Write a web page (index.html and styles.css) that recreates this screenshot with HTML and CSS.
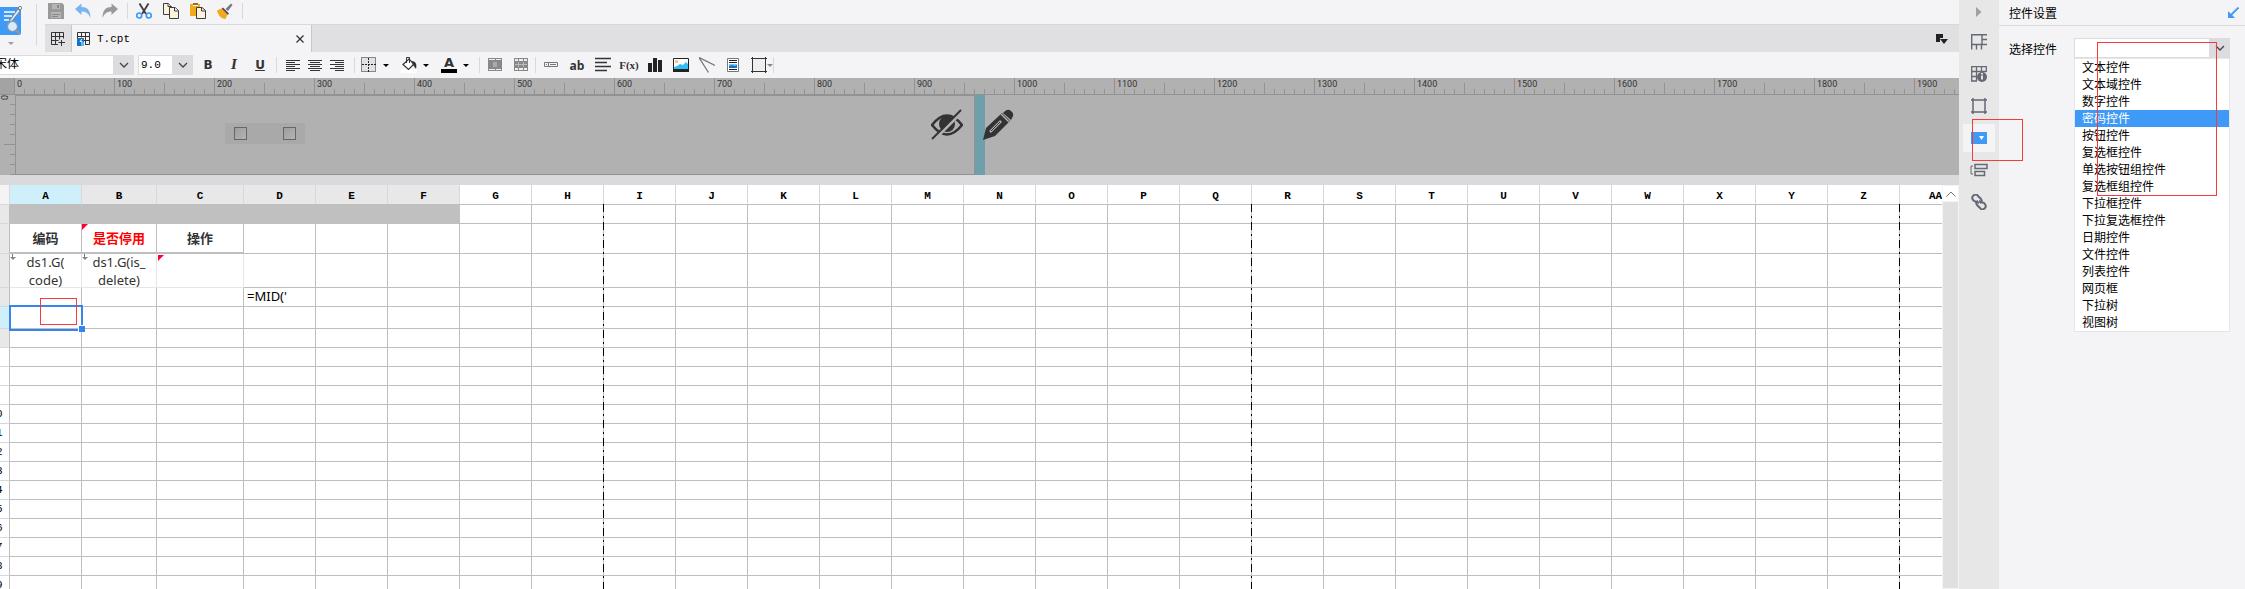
FILE: index.html
```html
<!DOCTYPE html>
<html lang="zh-CN">
<head>
  <meta charset="UTF-8" />
  <meta name="viewport" content="width=device-width, initial-scale=1" />
  <title>T.cpt</title>
  <link rel="stylesheet" href="styles.css">
</head>
<body>
<main class="editor">
  <header class="top">
    <div class="app-menu">
      <button class="app-btn" aria-label="预览">
        <svg width="22" height="40" viewBox="0 0 22 40">
          <path d="M0 2h19q2 0 2 2v24q0 2-2 2H0z" fill="#3f9af7"/>
          <path d="M4 7h11M4 11h8M4 15h5" stroke="#fff" stroke-width="1.6"/>
          <path d="M10 15l8-11 2 2-8 10-3 1z" fill="#e8e8ea" stroke="#77797f" stroke-width=".8"/>
          <circle cx="20" cy="3" r="1.6" fill="#fff" stroke="#77797f"/>
          <circle cx="12.5" cy="21.500" r="5" fill="#d4ecfd" stroke="#8b98a6" stroke-width="1.2"/>
          <path d="M16 25l4 4" stroke="#8b98a6" stroke-width="2"/>
          <path d="M8 37h6l-3 3z" fill="#a0a0a0"/>
        </svg>
      </button>
    </div>
    <div class="top-rows">
      <div class="quick">
        <div class="quick-group">
          <button class="icon" aria-label="保存"><svg viewBox="0 0 16 16"><path d="M0 0h14l2 2v14H0z" fill="#999"/><path d="M4 1h8v5H4zM3 9h10v6H3z" fill="#b5b5b5"/><path d="M9 2h2v3H9zM4 11h8v1H4zM4 13h6v1H4z" fill="#888"/></svg></button>
          <button class="icon" aria-label="撤销"><svg viewBox="0 0 16 16"><path d="M0 6l6.500-5.500V4C12 4 15.500 7 15.500 15 13.500 10.500 11 8.500 6.500 8.500V12z" fill="#79b4f2"/></svg></button>
          <button class="icon" aria-label="重做"><svg viewBox="0 0 16 16"><path d="M16 6L9.500.5V4C4 4 .5 7 .5 15 2.500 10.500 5 8.500 9.500 8.500V12z" fill="#999"/></svg></button>
        </div>
        <div class="quick-group">
          <button class="icon" aria-label="剪切"><svg viewBox="0 0 16 16" fill="none"><path d="M3.500.5L10 11M12.500.5L6 11" stroke="#3c3c44" stroke-width="1.800"/><circle cx="3.200" cy="12.500" r="2.500" stroke="#3f9af7" stroke-width="1.700"/><circle cx="12.800" cy="12.500" r="2.500" stroke="#3f9af7" stroke-width="1.700"/></svg></button>
          <button class="icon" aria-label="复制"><svg viewBox="0 0 16 16" fill="#fdf3dc" stroke="#3c3c44"><path d="M.5.500h5l3 3v8h-8z"/><path d="M5 .5v3h3.500"/><path d="M6.500 4.500h5.500l3.500 3v8h-9z"/><path d="M11.500 4.500v3.500h4"/></svg></button>
          <button class="icon" aria-label="粘贴"><svg viewBox="0 0 16 16"><path d="M0 1h10v12H0z" fill="#f2a91c"/><path d="M3 0h5v3H3z" fill="#9a6a20"/><path d="M3 2h5v1H3z" fill="#fff"/><path d="M6.500 4.500h5.500l3.500 3v8h-9z" fill="#fdf3dc" stroke="#3c3c44"/><path d="M11.500 4.500v3.500h4" fill="none" stroke="#3c3c44"/></svg></button>
          <button class="icon" aria-label="格式刷"><svg viewBox="0 0 16 16"><path d="M8.500 6L14 .5l1.500 1.500L11 8z" fill="#77798a"/><path d="M6 4.500l6 6-1.500 1.500-6-6z" fill="#4a4a50"/><path d="M4.500 5.500l6 6-2 4.500C4 15.500 1 12.500 0 7.500z" fill="#f2a91c"/></svg></button>
        </div>
      </div>
      <nav class="tabs">
        <button class="new-tab" aria-label="新建"><svg width="14" height="14" viewBox="0 0 14 14" fill="none" stroke="#333"><path d="M7 12.500H.5V.5h12v6M.5 4.500h12M.5 8.500h7M4.500.5v12M8.500.5v7M10.500 8v6M7.500 10.500h6.500"/></svg></button>
        <div class="tab">
          <svg width="14" height="14" viewBox="0 0 14 14" fill="none" stroke="#333"><path d="M.5 6V.5h12v12H8M.5 4.500h12M7 8.500h5.500M4.500.5v5M8.500.5v12"/><path d="M0 6h7v8H0z" fill="#1672c4" stroke="none"/><path d="M5 7L3 9.500h2V13" stroke="#fff"/><path d="M5 10h2v4H4z" fill="#55b9f3" stroke="none"/></svg>
          <span class="tab-name">T.cpt</span>
          <button class="tab-close" aria-label="关闭"><svg width="8" height="8" viewBox="0 0 8 8"><path d="M.5.500l7 7M7.500.5l-7 7" stroke="#333" stroke-width="1.300"/></svg></button>
        </div>
        <button class="tab-list" aria-label="标签列表"><svg width="12" height="10" viewBox="0 0 12 10" fill="#222"><path d="M0 0h7v4H4v4H0z"/><path d="M4 5h8L8 10z"/></svg></button>
      </nav>
    </div>
  </header>

  <div class="format">
    <select class="font-name" aria-label="字体"><option>宋体</option></select>
    <select class="font-size" aria-label="字号"><option>9.0</option></select>
    <div class="group style">
      <button class="icon letter" aria-label="加粗"><b>B</b></button>
      <button class="icon letter" aria-label="斜体"><i>I</i></button>
      <button class="icon letter" aria-label="下划线"><u>U</u></button>
    </div>
    <div class="group align">
      <button class="icon" aria-label="左对齐"><svg viewBox="0 0 16 16"><path d="M1 3.500h14M1 5.500h9M1 7.500h14M1 9.500h9M1 11.500h14M1 13.500h9" stroke="#333"/></svg></button>
      <button class="icon" aria-label="居中"><svg viewBox="0 0 16 16"><path d="M1 3.500h14M3 5.500h10M1 7.500h14M3 9.500h10M1 11.500h14M3 13.500h10" stroke="#333"/></svg></button>
      <button class="icon" aria-label="右对齐"><svg viewBox="0 0 16 16"><path d="M1 3.500h14M6 5.500h9M1 7.500h14M6 9.500h9M1 11.500h14M6 13.500h9" stroke="#333"/></svg></button>
    </div>
    <div class="group color">
      <button class="icon drop" aria-label="边框"><svg viewBox="0 0 16 16"><rect x=".5" y=".5" width="14" height="14" fill="#e2e2e4" stroke="#222" stroke-dasharray="1 1"/><path d="M7.500 1v14M1 7.500h14" stroke="#222" stroke-dasharray="2 1"/></svg></button>
      <button class="icon drop" aria-label="背景"><svg viewBox="0 0 16 16"><path d="M0 12h16v4H0z" fill="#fff"/><path d="M2 7.500L8 2l5 5-5.500 5.500z" fill="#fff" stroke="#333" stroke-width="1.200"/><path d="M5.500 6V.5h3V6" fill="none" stroke="#333"/><path d="M10 4c5 0 6 3 5 8l-3-4z" fill="#333"/></svg></button>
      <button class="icon drop font-color" aria-label="字体颜色">A</button>
    </div>
    <div class="group">
      <button class="icon" aria-label="合并单元格"><svg viewBox="0 0 16 16"><path d="M1 1h14v13H1z" fill="#888"/><path d="M2 2h6v1H2zM9 2h5v1H9zM2 12h6v1H2zM9 12h5v1H9z" fill="#eee"/><path d="M6 5h4v5H6z" fill="#aaa"/></svg></button>
      <button class="icon" aria-label="取消合并"><svg viewBox="0 0 16 16"><path d="M1 1h14v13H1z" fill="#888"/><path d="M2 2h3v2H2zM6 2h4v2H6zM11 2h3v2h-3zM2 11h3v2H2zM6 11h4v2H6zM11 11h3v2h-3z" fill="#eee"/><path d="M2 7.500h12M5.500 5v5M10.500 5v5" stroke="#bbb"/></svg></button>
    </div>
    <div class="group">
      <button class="icon" aria-label="控件"><svg viewBox="0 0 16 16" fill="none" stroke="#777"><path d="M1.500 5.500h13v4h-13zM5.500 5.500v4M3 7.500h1M7 7.500h6"/></svg></button>
      <button class="icon ab">ab</button>
      <button class="icon" aria-label="富文本"><svg viewBox="0 0 16 16"><path d="M0 1.500h16M0 5.500h12M0 9.500h16M0 13.500h12" stroke="#333" stroke-width="1.400"/></svg></button>
      <button class="icon fx">F(x)</button>
      <button class="icon" aria-label="图表"><svg viewBox="0 0 16 16" fill="#222"><path d="M1 6h4v9H1zM6 1h4v14H6zM11 3h4v12h-4z"/></svg></button>
      <button class="icon" aria-label="图片"><svg viewBox="0 0 16 16"><path d="M.5 1.500h15v13H.5z" fill="#fff" stroke="#222"/><circle cx="3.500" cy="4.500" r="1.500" fill="#fbb95a"/><path d="M1 10l3-1 3-2 3 1 3-3 2 2v5H1z" fill="#35bdf5"/><path d="M0 12h16v3H0z" fill="#222"/></svg></button>
      <button class="icon" aria-label="斜线"><svg viewBox="0 0 16 16"><path d="M0 .5l16 8M0 .5l9.500 15" stroke="#777" stroke-width="1.300"/></svg></button>
      <button class="icon" aria-label="子报表"><svg viewBox="0 0 16 16"><path d="M2.500 1.500h11v13h-11z" fill="#fff" stroke="#777"/><path d="M4 3.500h8M4 5.500h8M4 12.500h8" stroke="#222"/><path d="M4 7h8v4H4z" fill="#79c4f7"/><path d="M4 11V9l3-1 3 1 2-1v3z" fill="#1672c4"/></svg></button>
      <button class="icon drop-near" aria-label="悬浮元素"><svg viewBox="0 0 16 16"><path d="M1.500 1.500h12v12h-12z" fill="#eee"/><path d="M0 1.500h16M0 14.500h16M1.500 0v16M14.500 0v16" stroke="#333"/></svg></button>
    </div>
  </div>

  <section class="form-area">
    <div class="ruler">
      <div class="ruler-corner"></div>
      <div class="ruler-scale" id="scale"></div>
    </div>
    <div class="form-row">
      <div class="v-ruler"><span>0</span></div>
      <div class="form-canvas">
        <div class="form-body">
          <div class="param-box">
            <input type="checkbox" aria-label="参数一">
            <input type="checkbox" aria-label="参数二">
          </div>
        </div>
        <div class="form-handle"></div>
        <div class="form-tools">
          <svg width="32" height="32" viewBox="0 0 32 32"><path d="M1 16q15-19 30 0-15 19-30 0z" fill="none" stroke="#333" stroke-width="2.600"/><circle cx="16" cy="15" r="8" fill="#333"/><path d="M2 32L32 2" stroke="#b1b1b1" stroke-width="3"/><path d="M1 30L30 1" stroke="#333" stroke-width="2"/></svg>
          <svg width="32" height="32" viewBox="0 0 32 32"><path d="M1 31l3-12L20 4l8 8-15 15z" fill="#333"/><path d="M19 5l8 8" stroke="#b1b1b1" stroke-width="1.500"/><path d="M22 3q4-4 7-1 4 3 1 7l-1 2-8-7z" fill="#333"/><path d="M8 23L19 12" stroke="#b1b1b1" stroke-width="2.500"/><path d="M9 22L18 13" stroke="#333"/></svg>
        </div>
      </div>
    </div>
  </section>

  <section class="sheet">
    <div class="grid">
      <table id="grid">
        <thead></thead>
        <tbody></tbody>
      </table>
      <div class="page-line first"></div>
      <div class="page-line second"></div>
      <div class="page-line third"></div>
      <div class="mark cell-mark"></div>
    </div>
    <div class="scroll">
      <button class="scroll-up" aria-label="向上"><svg width="10" height="6" viewBox="0 0 10 6"><path d="M.5 5.500L5 1l4.500 4.500" fill="none" stroke="#777"/></svg></button>
      <div class="scroll-thumb"></div>
    </div>
  </section>
</main>

<nav class="strip">
  <button class="collapse" aria-label="收起"><svg width="6" height="10" viewBox="0 0 6 10"><path d="M0 0l5.500 5L0 10z" fill="#a0a0a0"/></svg></button>
  <button class="side" aria-label="单元格元素"><svg viewBox="0 0 16 16" fill="none" stroke="#666874" stroke-width="1.400"><path d="M.7 15.500V.7H16M11 .7v9.800M.7 10.500h15.300M11 5.500h5M5.500 10.500v5M10.500 10.500v5"/></svg></button>
  <button class="side" aria-label="单元格属性"><svg viewBox="0 0 16 16" fill="none" stroke="#666874" stroke-width="1.300"><path d="M6 15H.7V.7h14.600V6M.7 5.500h14.600M.7 10.500H6M5.500.7V15M10.500.7V6"/><circle cx="11" cy="11" r="5" fill="#666874" stroke="none"/><path d="M11 9.500v4M11 7v1.500" stroke="#fff" stroke-width="1.600"/></svg></button>
  <button class="side" aria-label="悬浮元素"><svg viewBox="0 0 16 16" fill="none" stroke="#666874" stroke-width="1.500"><path d="M0 2h16M0 14h16M2 0v16M14 0v16"/></svg></button>
  <button class="side active" aria-label="控件设置"><svg viewBox="0 0 16 16"><path d="M0 2h16v12H0z" fill="#3f9af7"/><path d="M8 6h5l-2.500 4z" fill="#fff"/></svg></button>
  <button class="side" aria-label="条件属性"><svg class="spread" viewBox="0 0 18 16" fill="none" stroke="#666874" stroke-width="1.500"><path d="M3 4H1v8h2" stroke-width="1"/><path d="M5 2.500h12v4H5zM5 9.500h9.500v4H5z"/></svg></button>
  <button class="side" aria-label="超级链接"><svg viewBox="0 0 16 16" fill="none" stroke="#666874" stroke-width="2"><path d="M8 9L3 7Q0 4 2 2q3-3 5 0l3 3q2 3-1 4"/><path d="M8 7l5 2q3 3 1 5-3 3-5 0l-3-3Q4 8 7 7"/></svg></button>
  <div class="mark strip-mark"></div>
</nav>

<aside class="panel">
  <div class="panel-title">
    <span>控件设置</span>
    <svg width="12" height="12" viewBox="0 0 12 12"><path d="M11.500.5L4 8" stroke="#3f9af7" stroke-width="1.800"/><path d="M1 4v7h7z" fill="#3f9af7"/></svg>
  </div>
  <div class="panel-row">
    <label for="widget">选择控件</label>
    <div class="combo">
      <select id="widget"><option></option></select>
      <ul class="menu" role="listbox" aria-label="选择控件">
        <li role="option">文本控件</li>
        <li role="option">文本域控件</li>
        <li role="option">数字控件</li>
        <li role="option" class="selected" aria-selected="true">密码控件</li>
        <li role="option">按钮控件</li>
        <li role="option">复选框控件</li>
        <li role="option">单选按钮组控件</li>
        <li role="option">复选框组控件</li>
        <li role="option">下拉框控件</li>
        <li role="option">下拉复选框控件</li>
        <li role="option">日期控件</li>
        <li role="option">文件控件</li>
        <li role="option">列表控件</li>
        <li role="option">网页框</li>
        <li role="option">下拉树</li>
        <li role="option">视图树</li>
      </ul>
      <div class="mark menu-mark"></div>
    </div>
  </div>
</aside>
<script src="grid.js"></script>
</body>
</html>
```

FILE: grid.js
```js
const COLS = 'A B C D E F G H I J K L M N O P Q R S T U V W X Y Z AA'.split(' ');
const ROWS = 19;
const USED_COLS = 6;
const USED_ROWS = 6;

// cell content, keyed by column + row
const cells = {
  A2: { text: '编码', cls: 'title' },
  B2: { text: '是否停用', cls: 'title red flag' },
  C2: { text: '操作', cls: 'title' },
  A3: { text: 'ds1.G(\ncode)', cls: 'data expand' },
  B3: { text: 'ds1.G(is_\ndelete)', cls: 'data expand' },
  C3: { text: '', cls: 'data flag small' },
  D4: { text: "=MID('", cls: 'formula' },
  A5: { text: '', cls: 'current' }
};

const head = document.createElement('tr');
head.innerHTML = '<th class="corner"></th>';
COLS.forEach((name, i) => {
  const th = document.createElement('th');
  th.textContent = name;
  th.className = 'col ' + (i === 0 ? 'on' : i < USED_COLS ? 'used' : '');
  if (name === 'B') th.classList.add('wide');
  if (name === 'C') th.classList.add('wider');
  head.appendChild(th);
});
document.querySelector('#grid thead').appendChild(head);

const body = document.querySelector('#grid tbody');
for (let r = 1; r <= ROWS; r++) {
  const tr = document.createElement('tr');
  tr.className = 'row' + r;
  const th = document.createElement('th');
  th.textContent = r > 9 ? r : '';
  th.className = r === 5 ? 'on' : r <= USED_ROWS ? 'used' : '';
  tr.appendChild(th);
  COLS.forEach((name, i) => {
    const td = document.createElement('td');
    const cell = cells[name + r];
    if (cell) {
      td.className = cell.cls;
      const div = document.createElement('div');
      div.textContent = cell.text;
      td.appendChild(div);
    }
    if (r === 1 && i < USED_COLS) td.className = 'frozen';
    tr.appendChild(td);
  });
  body.appendChild(tr);
}

// ruler labels, one every 100px
const scale = document.getElementById('scale');
for (let n = 0; n <= 1900; n += 100) {
  const span = document.createElement('span');
  span.textContent = n;
  scale.appendChild(span);
}
```

FILE: styles.css
```css
* {
  box-sizing: border-box;
}

body {
  margin: 0;
  height: 100vh;
  display: flex;
  overflow: hidden;
  background: #f4f4f6;
  color: #000;
  font-family: "Liberation Sans", "Noto Sans CJK SC", sans-serif;
  font-size: 12px;
}

button {
  border: none;
  background: none;
  padding: 0;
  color: #333;
  font-family: inherit;
  display: flex;
  align-items: center;
  justify-content: center;
}

svg {
  display: block;
  flex: none;
}

select {
  appearance: none;
  height: 20px;
  border: 1px solid #dcdcde;
  border-radius: 0;
  color: #000;
  font-size: 12px;
  font-family: "Liberation Mono", "Noto Sans CJK SC", monospace;
  background: #fff url("data:image/svg+xml,%3Csvg xmlns='http://www.w3.org/2000/svg' width='20' height='20'%3E%3Cpath d='M0 0h20v20H0z' fill='%23dcdce0'/%3E%3Cpath d='M7 8l4 4 4-4' fill='none' stroke='%23444' stroke-width='1.3'/%3E%3C/svg%3E") right center no-repeat;
}

.editor {
  flex: 1;
  min-width: 0;
  display: flex;
  flex-direction: column;
}

/* top area */
.top {
  display: flex;
  height: 52px;
}

.app-menu {
  width: 45px;
  padding: 4px 0;
}

.app-btn {
  width: 37px;
  height: 42px;
  justify-content: flex-start;
  border-right: 1px solid #d8d8da;
}

.top-rows {
  flex: 1;
  min-width: 0;
}

.quick {
  display: flex;
  height: 24px;
  padding: 3px 0;
}

.quick-group {
  display: flex;
  gap: 11px;
  height: 16px;
  padding: 0 9px 0 8px;
  border-right: 1px solid #d8d8da;
}

.quick-group:first-child {
  padding-left: 3px;
}

.icon {
  width: 16px;
  height: 16px;
  position: relative;
}

.icon svg {
  width: 16px;
  height: 16px;
}

.tabs {
  display: flex;
  height: 28px;
  background: #e0e0e2;
  border-top: 1px solid #d8d8da;
}

.new-tab {
  width: 26px;
}

.tab {
  width: 241px;
  display: flex;
  align-items: center;
  gap: 6px;
  padding: 0 7px 0 5px;
  background: #f4f4f6;
  border-left: 1px solid #c8c8ca;
  border-right: 1px solid #c8c8ca;
}

.tab-name {
  flex: 1;
  font-family: "Liberation Mono", monospace;
  font-size: 11px;
}

.tab-list {
  margin-left: auto;
  padding: 0 11px;
}

/* format bar */
.format {
  display: flex;
  align-items: center;
  height: 26px;
}

.font-name {
  width: 140px;
  margin-left: -6px;
  padding: 0;
}

.font-size {
  width: 55px;
  margin: 0 0 0 4px;
  padding: 0 0 0 2px;
  font-size: 11px;
}

.group {
  display: flex;
  gap: 10px;
  height: 16px;
  padding: 0 6px 0 7px;
  border-right: 1px solid #d8d8da;
}

.group.style {
  padding-right: 8px;
}

.group.align {
  gap: 6px;
  padding: 0 9px 0 8px;
}

.group.color {
  gap: 24px;
  padding: 0 22px 0 6px;
}

.drop::after,
.drop-near::after {
  content: "";
  position: absolute;
  left: 22px;
  top: 7px;
  border: 3px solid transparent;
  border-top-color: #000;
  border-bottom: none;
}

.drop-near::after {
  left: 16px;
  border-top-color: #888;
}

.letter {
  font: bold 12px "DejaVu Sans", sans-serif;
}

.letter i {
  font-family: "DejaVu Serif", serif;
}

.font-color {
  font: bold 13px "DejaVu Sans", sans-serif;
  align-items: flex-start;
  line-height: 11px;
  border-bottom: 4px solid #000;
}

.ab {
  font: bold 12px "Open Sans", sans-serif;
}

.fx {
  font: bold 11px "Liberation Serif", serif;
}

/* parameter form */
.form-area {
  background: #b1b1b1;
  border-bottom: 10px solid #dadadc;
}

.ruler {
  display: flex;
  height: 17px;
  border-bottom: 1px solid #929292;
}

.ruler-corner {
  width: 14px;
  background: #a3a3a3;
}

.ruler-scale {
  flex: 1;
  min-width: 0;
  display: flex;
  overflow: hidden;
  background-image:
    linear-gradient(to right, #929292 1px, transparent 1px),
    linear-gradient(to right, #929292 1px, transparent 1px),
    linear-gradient(to right, #929292 1px, transparent 1px);
  background-size: 100px 16px, 50px 11px, 10px 5px;
  background-position: left bottom;
  background-repeat: repeat-x;
}

.ruler-scale span {
  flex: none;
  width: 100px;
  padding-left: 3px;
  color: #333;
  font: 9px/13px Roboto, sans-serif;
}

.form-row {
  display: flex;
  height: 80px;
}

.v-ruler {
  width: 15px;
  color: #333;
  background-image:
    linear-gradient(to top, #929292 1px, transparent 1px),
    linear-gradient(to top, #929292 1px, transparent 1px);
  background-size: 11px 50px, 5px 10px;
  background-position: right top;
  background-repeat: repeat-y;
}

.v-ruler span {
  display: block;
  width: 8px;
  height: 6px;
  font: 9px/8px Roboto, sans-serif;
  writing-mode: vertical-rl;
}

.form-canvas {
  flex: 1;
  display: flex;
  position: relative;
}

.form-body {
  width: 960px;
  position: relative;
  border: 1px solid #929292;
}

.form-handle {
  width: 10px;
  background: #6ea0ac;
}

.param-box {
  position: absolute;
  left: 209px;
  top: 27px;
  width: 80px;
  height: 21px;
  padding: 4px 9px;
  display: flex;
  justify-content: space-between;
  background: #a9a9a9;
}

.param-box input {
  appearance: none;
  width: 13px;
  height: 13px;
  margin: 0;
  border: 1px solid #666;
  background: linear-gradient(135deg, #9d9d9d, #b4b4b4);
}

.form-tools {
  position: absolute;
  left: 916px;
  top: 14px;
  display: flex;
  gap: 19px;
}

/* sheet */
.sheet {
  flex: 1;
  min-height: 0;
  display: flex;
}

.grid {
  flex: 1;
  min-width: 0;
  position: relative;
  overflow: hidden;
  background: #fff;
}

/* row header is partly scrolled out on the left */
table {
  margin-left: -17px;
  width: 1989px;
  table-layout: fixed;
  border-spacing: 0;
}

th,
td {
  height: 19px;
  padding: 0;
  border-right: 1px solid #bebebe;
  border-bottom: 1px solid #bebebe;
}

th {
  font: 11px/12px "Liberation Mono", monospace;
}

tbody th {
  border-bottom-color: #d8d8da;
}

.corner {
  width: 27px;
  background: #f4f4f6;
  border-color: #d8d8da;
}

.col {
  width: 72px;
  height: 20px;
  padding-top: 2px;
  font-weight: bold;
  border-right-color: #d8d8da;
}

.col.wide {
  width: 75px;
}

.col.wider {
  width: 87px;
}

.used {
  background: #e8e8e8;
}

.on {
  background: #cff0fb;
}

.row2 > * {
  height: 30px;
}

.row3 > * {
  height: 34px;
}

.row5 > * {
  height: 22px;
}

td {
  position: relative;
  color: #333;
  font: 13px/18px "Noto Sans", "Noto Sans CJK SC", sans-serif;
  text-align: center;
}

td div {
  display: flex;
  height: 100%;
  align-items: center;
  justify-content: center;
  white-space: pre;
}

.frozen {
  background: #c0c0c0;
  border-color: #c0c0c0;
}

.title {
  font-weight: bold;
  border-bottom: 2px solid #bebebe;
}

.red {
  color: #f00;
}

.data {
  border-color: #e6e6e6;
}

.data div {
  height: 33px;
}

.formula div {
  height: 18px;
  padding-left: 3px;
  color: #000;
  line-height: 16px;
  align-items: flex-start;
  justify-content: flex-start;
}

.flag::before {
  content: "";
  position: absolute;
  left: 0;
  top: 0;
  border: 3px solid #f03;
  border-right-color: transparent;
  border-bottom-color: transparent;
}

.flag.small::before {
  left: 1px;
  top: 1px;
}

.expand::before {
  content: "";
  position: absolute;
  left: 2px;
  top: 0;
  width: 1px;
  height: 4px;
  background: #777;
}

.expand::after {
  content: "";
  position: absolute;
  left: 0;
  top: 3px;
  border: 3px solid transparent;
  border-top-color: #888;
  border-bottom: none;
}

.current::before {
  content: "";
  position: absolute;
  z-index: 1;
  left: -1px;
  top: -2px;
  right: -2px;
  bottom: -3px;
  border: 2px solid #3584f0;
}

.current::after {
  content: "";
  position: absolute;
  z-index: 1;
  right: -4px;
  bottom: -4px;
  width: 6px;
  height: 6px;
  background: #3584f0;
  border: 1px solid #fff;
  border-right: none;
  border-bottom: none;
}

.page-line {
  position: absolute;
  top: 19px;
  bottom: 0;
  width: 1px;
  background: repeating-linear-gradient(#000 0 8px, #bebebe 8px 12px, #000 12px 14px, #bebebe 14px 18px);
}

.page-line.first {
  left: 603px;
}

.page-line.second {
  left: 1251px;
}

.page-line.third {
  left: 1899px;
}

.scroll {
  width: 17px;
  display: flex;
  flex-direction: column;
  padding: 1px;
  gap: 1px;
}

.scroll-up {
  height: 15px;
  background: #fff;
}

.scroll-thumb {
  flex: 1;
  background: #e0e0e0;
}

/* red outlines over the screen */
.mark {
  position: absolute;
  z-index: 2;
  border: 1px solid #f93a3a;
  pointer-events: none;
}

.cell-mark {
  left: 40px;
  top: 113px;
  width: 37px;
  height: 27px;
}

.strip-mark {
  left: 13px;
  top: 119px;
  width: 51px;
  height: 42px;
}

.menu-mark {
  left: 23px;
  top: 4px;
  width: 120px;
  height: 154px;
}

/* right side */
.strip {
  position: relative;
  width: 40px;
  display: flex;
  flex-direction: column;
  align-items: center;
  gap: 4px;
  background: #e7e7e7;
}

.collapse {
  width: 32px;
  height: 24px;
}

.side {
  width: 32px;
  height: 28px;
}

.side svg {
  width: 16px;
  height: 16px;
}

.side .spread {
  width: 18px;
}

.side.active {
  background: #f4f4f6;
}

.panel {
  width: 246px;
}

.panel-title {
  display: flex;
  align-items: center;
  justify-content: space-between;
  height: 26px;
  padding: 0 6px 0 10px;
  border-bottom: 1px solid #d8d8da;
}

.panel-row {
  display: flex;
  align-items: center;
  gap: 17px;
  padding: 12px 15px 0 10px;
}

.combo {
  flex: 1;
  position: relative;
}

.combo select {
  display: block;
  width: 100%;
}

.menu {
  position: absolute;
  left: 0;
  right: 0;
  top: 20px;
  margin: 0;
  padding: 0;
  list-style: none;
  background: #fff;
  border: 1px solid #e6e6e8;
}

.menu li {
  height: 17px;
  padding-left: 7px;
  line-height: 19px;
}

.menu .selected {
  background: #3f9af7;
  color: #fff;
}
```
